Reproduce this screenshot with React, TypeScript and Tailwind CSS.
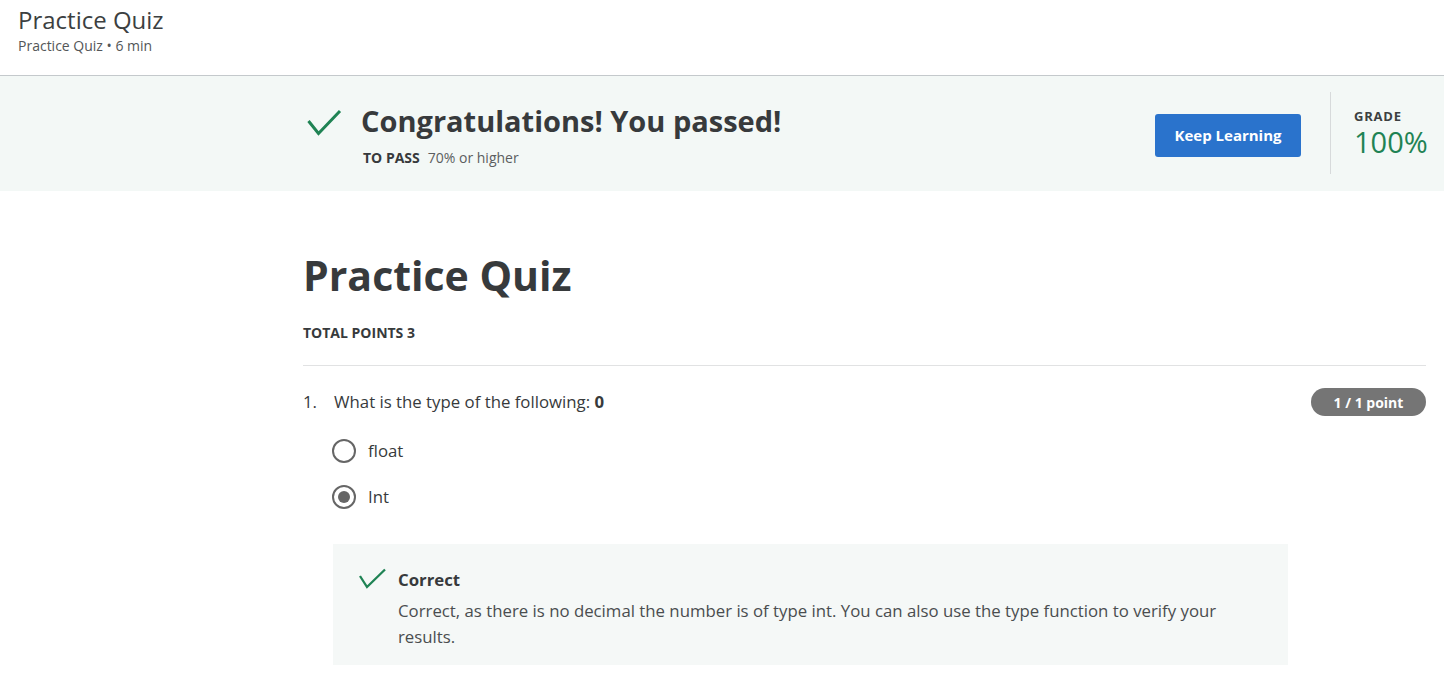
import React from "react";

export default function App() {
  return (
    <div className="min-h-[695px] bg-white text-[#373a3c]" style={{ fontFamily: '"Open Sans", "Noto Sans", sans-serif' }}>
      <header className="h-[76px] border-b border-[#c4c9cc] pl-[18px] pt-[4px]">
        <div className="text-[24px] leading-[32px] text-[#3c3f41]">Practice Quiz</div>
        <div className="text-[14px] leading-[20px] text-[#535658]">Practice Quiz • 6 min</div>
      </header>

      <section className="h-[115px] bg-[#f3f8f6]">
        <div className="ml-[303px] mr-[18px] flex h-full items-start">
          <div className="flex flex-1 items-start pt-[27px]">
            <svg width="35" height="28" viewBox="0 0 35 28" className="ml-[4px] mt-[6px] text-[#1f8354]" fill="none" stroke="currentColor" strokeWidth="3">
              <path d="M1.5 12 L11.5 24.5 L33 2" />
            </svg>
            <div className="ml-[19px]">
              <div className="text-[29px] font-bold leading-[36px] text-[#373a3c]">Congratulations! You passed!</div>
              <div className="mt-[10px] ml-[2px] text-[14px] leading-[18px]">
                <span className="font-bold">TO PASS</span>
                <span className="ml-[8px] text-[#5b5e60]">70% or higher</span>
              </div>
            </div>
          </div>
          <button className="mt-[38px] h-[43px] w-[146px] rounded-[3px] bg-[#2a73cc] text-[15px] font-bold text-white">Keep Learning</button>
          <div className="ml-[29px] mt-[16px] h-[82px] w-px bg-[#d7dadb]" />
          <div className="ml-[23px] mt-[32px] w-[72px]">
            <div className="text-[13px] font-bold leading-[16px] tracking-[0.8px] text-[#3c3f41]">GRADE</div>
            <div className="mt-[1px] text-[29px] leading-[34px] text-[#1f8354]">100%</div>
          </div>
        </div>
      </section>

      <main className="ml-[303px] mr-[18px]">
        <h1 className="mt-[57px] text-[41px] font-bold leading-[54px] text-[#373a3c]">Practice Quiz</h1>
        <div className="mt-[22px] text-[14px] font-bold leading-[18px] text-[#373a3c]">TOTAL POINTS 3</div>
        <div className="mt-[23px] h-px bg-[#e1e2e3]" />

        <div className="mt-[22px] flex items-center justify-between">
          <div className="text-[16.8px] leading-[24px] text-[#373a3c]">
            <span>1.</span>
            <span className="ml-[17px]">What is the type of the following: </span>
            <span className="font-bold">0</span>
          </div>
          <div className="flex h-[28px] w-[115px] items-center justify-center rounded-full bg-[#757575] text-[14px] font-bold text-white">1 / 1 point</div>
        </div>

        <div className="ml-[29px] mt-[23px] flex flex-col gap-[22px]">
          <div className="flex items-center">
            <div className="h-[24px] w-[24px] rounded-full border-[2px] border-[#666]" />
            <span className="ml-[12px] text-[16.8px] leading-[24px]">float</span>
          </div>
          <div className="flex items-center">
            <div className="flex h-[24px] w-[24px] items-center justify-center rounded-full border-[2px] border-[#666]">
              <div className="h-[12px] w-[12px] rounded-full bg-[#666]" />
            </div>
            <span className="ml-[12px] text-[16.8px] leading-[24px]">Int</span>
          </div>
        </div>

        <div className="ml-[30px] mt-[35px] w-[955px] bg-[#f5f8f7] pb-[15px] pl-[26px] pr-[40px] pt-[23px]">
          <div className="flex items-start">
            <svg width="27" height="21" viewBox="0 0 27 21" className="mt-[1px] shrink-0 text-[#1f8354]" fill="none" stroke="currentColor" strokeWidth="2.3">
              <path d="M1 8 L8 19 L26 1.5" />
            </svg>
            <div className="ml-[12px]">
              <div className="text-[16.8px] font-bold leading-[26px] text-[#373a3c]">Correct</div>
              <div className="mt-[5px] text-[16.8px] leading-[26px] text-[#4a4d4f]">
                Correct, as there is no decimal the number is of type int. You can also use the type function to verify your results.
              </div>
            </div>
          </div>
        </div>
      </main>
    </div>
  );
}
